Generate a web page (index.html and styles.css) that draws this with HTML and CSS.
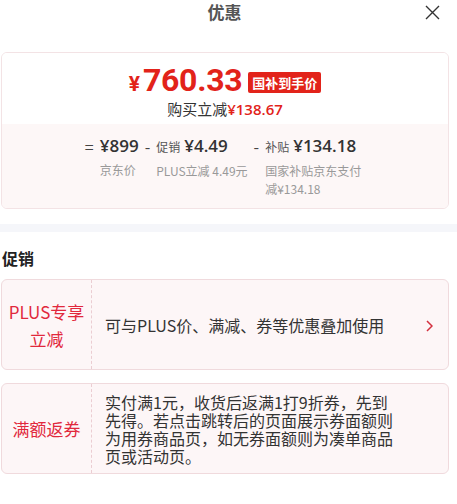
FILE: index.html
```html
<!DOCTYPE html>
<html lang="zh-CN">
<head>
<meta charset="utf-8">
<title>优惠</title>
<link rel="stylesheet" href="styles.css">
</head>
<body>
<header class="head">
  <h1 class="title">优惠</h1>
  <button class="close" aria-label="关闭">
    <svg width="15" height="15" viewBox="0 0 15 15"><path d="M1 1L14 14M14 1L1 14" stroke="#333" stroke-width="1.4" fill="none"/></svg>
  </button>
</header>

<div class="content">
  <section class="summary">
    <div class="summary-top">
      <div class="price-row">
        <span class="amount"><span class="yen">¥</span><span class="num">760.33</span></span>
        <span class="badge">国补到手价</span>
      </div>
      <div class="save">购买立减<span class="save-num">¥138.67</span></div>
    </div>
    <div class="breakdown">
      <div class="item">
        <span class="op">=</span>
        <div class="col">
          <div class="val">¥899</div>
          <div class="lab">京东价</div>
        </div>
      </div>
      <div class="item">
        <span class="op">-</span>
        <div class="col">
          <div class="val"><span class="tag">促销</span>¥4.49</div>
          <div class="lab">PLUS立减 4.49元</div>
        </div>
      </div>
      <div class="item">
        <span class="op">-</span>
        <div class="col">
          <div class="val"><span class="tag">补贴</span>¥134.18</div>
          <div class="lab">国家补贴京东支付减¥134.18</div>
        </div>
      </div>
    </div>
  </section>
</div>

<div class="band"></div>

<div class="content">
  <h2 class="section-title">促销</h2>
  <div class="promo promo-plus">
    <div class="promo-name">PLUS专享<br>立减</div>
    <div class="promo-desc">可与PLUS价、满减、券等优惠叠加使用</div>
    <svg class="arrow" width="7" height="12" viewBox="0 0 7 12"><path d="M1 1L6 6L1 11" stroke="#d3303f" stroke-width="1.5" fill="none"/></svg>
  </div>
  <div class="promo">
    <div class="promo-name">满额返券</div>
    <div class="promo-desc promo-long">实付满1元，收货后返满1打9折券，先到先得。若点击跳转后的页面展示券面额则为用券商品页，如无券面额则为凑单商品页或活动页。</div>
  </div>
</div>
</body>
</html>
```

FILE: styles.css
```css
* { box-sizing: border-box; }

body {
  margin: 0;
  background: #fff;
  font-family: "Noto Sans CJK SC", "Noto Sans", sans-serif;
  color: #333;
}

.head {
  position: relative;
  height: 44px;
  width: 449px;
  display: flex;
  justify-content: center;
}

.title {
  margin: 0;
  font-size: 17px;
  font-weight: 700;
  color: #555;
  line-height: 24px;
}

.close {
  position: absolute;
  right: 9px;
  top: 5px;
  border: 0;
  background: none;
  padding: 0;
  width: 15px;
  height: 15px;
  display: flex;
}

.content {
  margin-left: 1px;
  width: 448px;
}

.summary {
  margin-top: 8px;
  border: 1px solid #f3e3e5;
  border-radius: 6px;
  overflow: hidden;
}

.summary-top {
  padding: 12px 0 5px;
  background: #fff;
  display: flex;
  flex-direction: column;
  align-items: center;
}

.price-row {
  height: 30px;
  display: flex;
  align-items: center;
  gap: 6px;
}

.amount {
  color: #e2231a;
  font-family: Roboto, "Open Sans", sans-serif;
  font-weight: 700;
  line-height: 1;
  white-space: nowrap;
}

.yen { font-size: 21px; margin-right: 3px; }
.num { font-size: 32px; letter-spacing: -0.3px; }

.badge {
  background: #e2231a;
  color: #fff;
  font-size: 13px;
  font-weight: 700;
  line-height: 21px;
  padding: 0 4px;
  border-radius: 2px;
  margin-top: 4px;
}

.save {
  margin-top: 4px;
  font-size: 15px;
  line-height: 20px;
  color: #333;
}

.save-num {
  color: #e2231a;
  font-family: "Open Sans", sans-serif;
  font-weight: 600;
}

.breakdown {
  background: #fdf7f7;
  padding: 11px 0 10px;
  display: flex;
  justify-content: center;
  gap: 6px;
}

.item {
  display: flex;
  gap: 6px;
}

.op {
  font-size: 16px;
  line-height: 22px;
  color: #444;
}

.col {
  display: flex;
  flex-direction: column;
}

.val {
  font-family: "Open Sans", sans-serif;
  font-weight: 600;
  font-size: 17px;
  line-height: 22px;
  color: #333;
  white-space: nowrap;
}

.tag {
  font-family: "Noto Sans CJK SC", sans-serif;
  font-weight: 400;
  font-size: 12px;
  color: #555;
  margin-right: 4px;
}

.lab {
  margin-top: 4px;
  font-size: 12px;
  line-height: 18px;
  color: #999;
  max-width: 100px;
}

.band {
  margin-top: 15px;
  height: 8px;
  background: #f5f6fa;
}

.section-title {
  margin: 14px 0 9px 1px;
  font-size: 16px;
  line-height: 24px;
  font-weight: 700;
  color: #222;
}

.promo {
  position: relative;
  display: flex;
  align-items: center;
  height: 91px;
  margin-bottom: 13px;
  background: #fdf6f7;
  border: 1px solid #f0dadd;
  border-radius: 6px;
}

.promo-name {
  flex: 0 0 90px;
  align-self: stretch;
  display: flex;
  align-items: center;
  justify-content: center;
  text-align: center;
  border-right: 1px dashed #ebcdd2;
  color: #e1283c;
  font-size: 17px;
  line-height: 27px;
}

.promo-desc {
  margin-left: 13px;
  font-size: 16px;
  line-height: 20px;
  color: #333;
}

.promo-long {
  width: 292px;
  line-height: 18px;
}

.arrow {
  position: absolute;
  right: 15px;
  top: 40px;
}
```
